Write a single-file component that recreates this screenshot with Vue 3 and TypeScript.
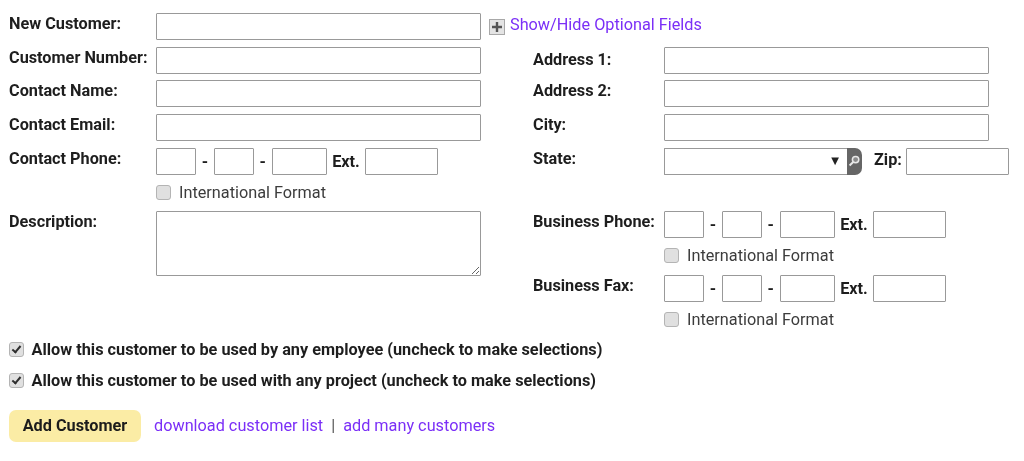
<script setup lang="ts">
interface PhoneField { label: string; key: string }
const rightPhones: PhoneField[] = [
  { label: 'Business Phone:', key: 'phone' },
  { label: 'Business Fax:', key: 'fax' },
]
const leftText = ['Customer Number:', 'Contact Name:', 'Contact Email:']
const rightText = ['Address 1:', 'Address 2:', 'City:']
const permissions = [
  'Allow this customer to be used by any employee (uncheck to make selections)',
  'Allow this customer to be used with any project (uncheck to make selections)',
]
</script>

<template>
  <form class="page" @submit.prevent>
    <div class="row top-row">
      <label class="label left-label">New Customer:</label>
      <input class="text wide" type="text" />
      <a class="toggle" href="#">
        <svg class="plus" width="16" height="16" viewBox="0 0 16 16" aria-hidden="true">
          <rect x="0.5" y="0.5" width="15" height="15" fill="#e4e4e4" stroke="#a8a8a8" />
          <path d="M8 3v10M3 8h10" stroke="#555" stroke-width="2.4" fill="none" />
        </svg>
        <span>Show/Hide Optional Fields</span>
      </a>
    </div>

    <div class="columns">
      <div class="col left-col">
        <div v-for="t in leftText" :key="t" class="row">
          <label class="label left-label">{{ t }}</label>
          <input class="text wide" type="text" />
        </div>
        <div class="row">
          <label class="label left-label">Contact Phone:</label>
          <div class="phone">
            <input class="text p1" type="text" /><b class="dash">-</b>
            <input class="text p1" type="text" /><b class="dash dash2">-</b>
            <input class="text p2" type="text" /><b class="ext">Ext.</b>
            <input class="text p3" type="text" />
          </div>
        </div>
        <div class="intl left-intl">
          <input class="box" type="checkbox" />
          <span>International Format</span>
        </div>
        <div class="row desc-row">
          <label class="label left-label">Description:</label>
          <textarea class="text wide area"></textarea>
        </div>
      </div>

      <div class="col right-col">
        <div v-for="(t, i) in rightText" :key="t" class="row">
          <label class="label right-label" :class="{ first: i === 0 }">{{ t }}</label>
          <input class="text wide" type="text" />
        </div>
        <div class="row">
          <label class="label right-label">State:</label>
          <div class="state">
            <div class="select"><span class="arrow">▼</span></div>
            <span class="finder">
              <svg width="15" height="27" viewBox="0 0 15 27" aria-hidden="true">
                <circle cx="8.6" cy="11.6" r="3.2" fill="#8a8a8a" stroke="#e8e8e8" stroke-width="1.5" />
                <path d="M6.2 14 2.6 17.4" stroke="#e8e8e8" stroke-width="2" fill="none" />
              </svg>
            </span>
            <b class="zip">Zip:</b>
            <input class="text zip-input" type="text" />
          </div>
        </div>
        <template v-for="p in rightPhones" :key="p.key">
          <div class="row biz-row" :class="p.key">
            <label class="label right-label">{{ p.label }}</label>
            <div class="phone">
              <input class="text p1" type="text" /><b class="dash">-</b>
              <input class="text p1" type="text" /><b class="dash dash2">-</b>
              <input class="text p2" type="text" /><b class="ext">Ext.</b>
              <input class="text p3" type="text" />
            </div>
          </div>
          <div class="intl right-intl">
            <input class="box" type="checkbox" />
            <span>International Format</span>
          </div>
        </template>
      </div>
    </div>

    <div class="perms">
      <label v-for="p in permissions" :key="p" class="perm">
        <input class="box" type="checkbox" checked />
        <span>{{ p }}</span>
      </label>
    </div>

    <div class="actions">
      <button class="add" type="submit">Add Customer</button>
      <a class="link" href="#">download customer list</a>
      <span class="sep">|</span>
      <a class="link" href="#">add many customers</a>
    </div>
  </form>
</template>

<style>
html, body { margin: 0; background: #fff; }
</style>

<style scoped>
.page {
  box-sizing: border-box;
  width: 1024px;
  height: 461px;
  padding: 13px 0 0 9px;
  font-family: Roboto, "Liberation Sans", sans-serif;
  font-size: 16.25px;
  color: #1e1e1e;
  overflow: hidden;
  background: #fff;
  filter: blur(0.35px);
}
.row { display: flex; align-items: flex-start; height: 27px; }
.top-row { margin-bottom: 6.67px; }
.columns { display: flex; }
.col { display: flex; flex-direction: column; }
.left-col { width: 524px; }
.left-col > .row, .right-col > .row { margin-bottom: 6.67px; }
.label {
  font-weight: 700;
  line-height: 22px;
  white-space: nowrap;
}
.left-label { width: 147px; }
.right-label { width: 131px; }
.right-label.first { line-height: 26px; }
.text {
  box-sizing: border-box;
  height: 27px;
  margin: 0;
  padding: 0 4px;
  background: #fff;
  border: 1px solid #999;
  border-radius: 1px;
  outline: none;
}
.wide { width: 325px; }
.toggle {
  display: flex;
  align-items: center;
  margin-left: 8px;
  height: 23px;
  gap: 5px;
  color: #7b2ff7;
  text-decoration: none;
}
.plus { margin-top: 5px; }
.phone, .state { display: flex; align-items: flex-start; }
.p1 { width: 40px; }
.p2 { width: 55.5px; }
.p3 { width: 73px; }
.dash { width: 18px; text-align: center; line-height: 27px; }
.dash2 { width: 17.5px; }
.ext { width: 38px; text-align: center; line-height: 27px; }
.intl {
  display: flex;
  align-items: center;
  gap: 8px;
  height: 15px;
  color: #3c3c3c;
}
.left-intl { margin: 3.3px 0 11px 147px; }
.right-intl { margin: 3.8px 0 11.6px 131px; }
.right-col > .row:nth-child(4) { margin-bottom: 36px; }
.box {
  appearance: none;
  -webkit-appearance: none;
  box-sizing: border-box;
  position: relative;
  flex: none;
  width: 15px;
  height: 15px;
  margin: 0;
  background: #e0e0e0;
  border: 1px solid #b4b4b4;
  border-radius: 3px;
}
.box:checked::after {
  content: "";
  position: absolute;
  left: 4px;
  top: 1px;
  width: 3px;
  height: 7px;
  border: solid #2f2f2f;
  border-width: 0 2px 2px 0;
  transform: rotate(40deg);
}
.desc-row { height: 65px; margin-bottom: 0; }
.area { height: 65px; resize: vertical; }
.select {
  box-sizing: border-box;
  position: relative;
  width: 183px;
  height: 27px;
  background: #fff;
  border: 1px solid #999;
  border-right: 0;
  border-radius: 1px 0 0 1px;
}
.arrow {
  position: absolute;
  right: 8px;
  top: 3px;
  font-family: "DejaVu Sans", sans-serif;
  font-size: 10px;
  line-height: 18px;
  color: #222;
}
.finder {
  display: block;
  width: 15px;
  height: 27px;
  background: #666;
  border-radius: 0 7px 7px 0;
}
.finder svg { display: block; }
.zip { margin-left: 12px; width: 32px; line-height: 24px; }
.zip-input { width: 103px; }
.perms {
  display: flex;
  flex-direction: column;
  gap: 15px;
  margin-top: 2.5px;
}
.perm {
  display: flex;
  align-items: center;
  gap: 7.5px;
  height: 16px;
  font-weight: 700;
  letter-spacing: 0.01px;
}
.actions {
  display: flex;
  align-items: center;
  margin-top: 22px;
}
.add {
  width: 132px;
  height: 32px;
  margin-right: 13px;
  padding: 0 0 1px;
  border: 0;
  border-radius: 7px;
  background: #fbeca5;
  color: #1c1c1c;
  font: 700 16.25px Roboto, sans-serif;
}
.link { color: #7b2ff7; text-decoration: none; margin-bottom: 2px; }
.sep { margin: 0 8px 2px; color: #555; }
</style>
